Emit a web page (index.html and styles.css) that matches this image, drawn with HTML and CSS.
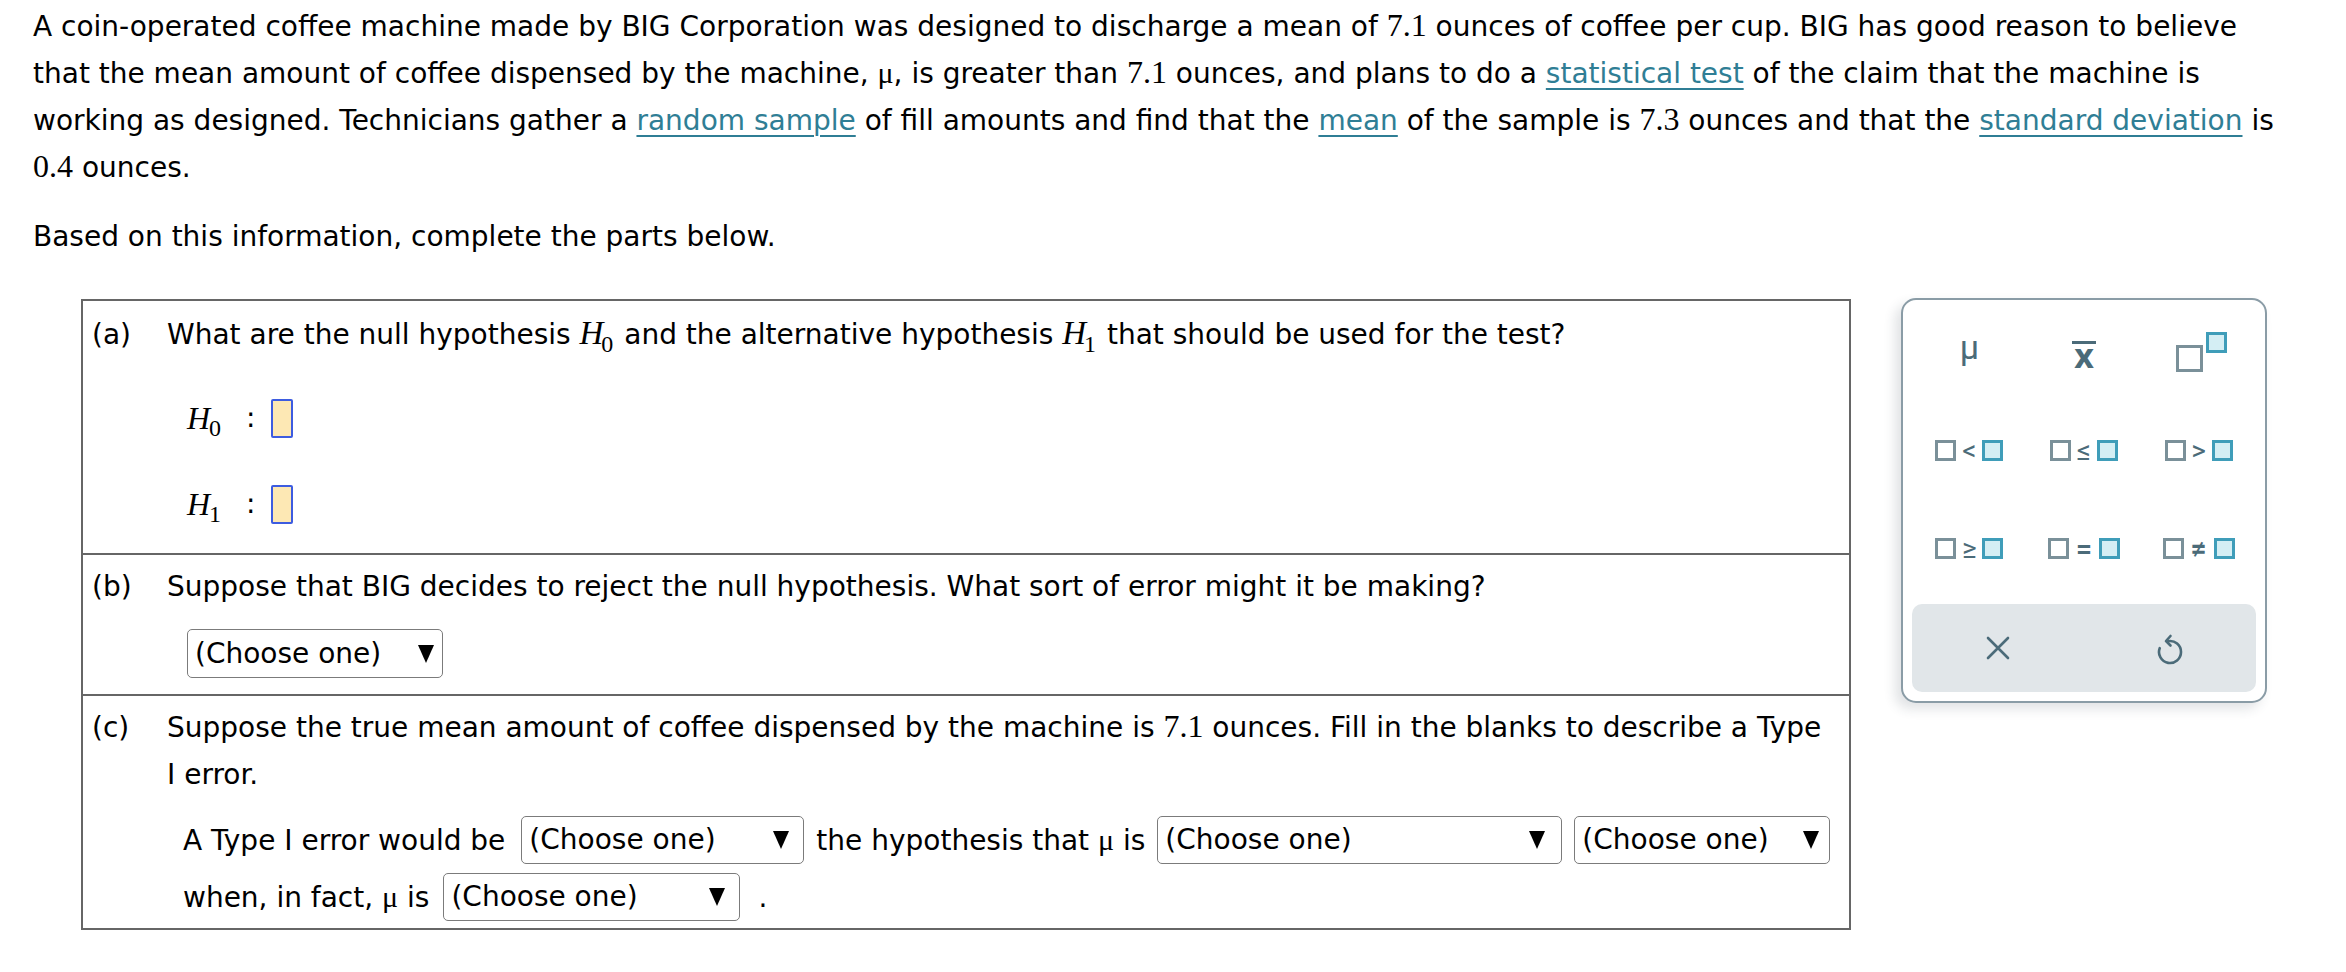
FILE: index.html
```html
<!DOCTYPE html>
<html lang="en">
<head>
<meta charset="utf-8">
<title>Hypothesis test</title>
<link rel="stylesheet" href="styles.css">
</head>
<body>
<div class="page">
  <p class="intro">A coin-operated coffee machine made by BIG Corporation was designed to discharge a mean of <span class="num">7.1</span> ounces of coffee per cup. BIG has good reason to believe that the mean amount of coffee dispensed by the machine, <span class="mu">μ</span>, is greater than <span class="num">7.1</span> ounces, and plans to do a <a class="link">statistical test</a> of the claim that the machine is working as designed. Technicians gather a <a class="link">random sample</a> of fill amounts and find that the <a class="link">mean</a> of the sample is <span class="num">7.3</span> ounces and that the <a class="link">standard deviation</a> is <span class="num">0.4</span> ounces.</p>
  <p class="intro2">Based on this information, complete the parts below.</p>

  <div class="workspace">
    <div class="qbox">
      <div class="part part-a">
        <div class="label">(a)</div>
        <div class="body">
          <div class="qline">What are the null hypothesis <span class="mvar">H</span><span class="msub">0</span> and the alternative hypothesis <span class="mvar">H</span><span class="msub">1</span> that should be used for the test?</div>
          <div class="hyps">
            <div class="hyp"><span class="hvar">H</span><span class="hsub">0</span><span class="colon">:</span><span class="slot"></span></div>
            <div class="hyp"><span class="hvar">H</span><span class="hsub">1</span><span class="colon">:</span><span class="slot"></span></div>
          </div>
        </div>
      </div>

      <div class="part part-b">
        <div class="label">(b)</div>
        <div class="body">
          <div class="qline">Suppose that BIG decides to reject the null hypothesis. What sort of error might it be making?</div>
          <div class="sel sel-error"><span>(Choose one)</span><span class="caret"></span></div>
        </div>
      </div>

      <div class="part part-c">
        <div class="label">(c)</div>
        <div class="body body-c">
          <div class="qline">Suppose the true mean amount of coffee dispensed by the machine is <span class="num">7.1</span> ounces. Fill in the blanks to describe a Type I error.</div>
          <div class="fill fill-first">
            <span class="ftext">A Type I error would be</span>
            <div class="sel sel-action"><span>(Choose one)</span><span class="caret"></span></div>
            <span class="ftext">the hypothesis that <span class="mu">μ</span> is</span>
            <div class="sel sel-value"><span>(Choose one)</span><span class="caret"></span></div>
            <div class="sel sel-short"><span>(Choose one)</span><span class="caret"></span></div>
          </div>
          <div class="fill">
            <span class="ftext">when, in fact, <span class="mu">μ</span> is</span>
            <div class="sel sel-fact"><span>(Choose one)</span><span class="caret"></span></div>
            <span class="ftext period">.</span>
          </div>
        </div>
      </div>
    </div>

    <div class="palette">
      <div class="keys">
        <div class="key"><span class="k-mu">μ</span></div>
        <div class="key"><span class="k-xbar">x</span></div>
        <div class="key"><span class="k-sup"><span class="bx bx-big"></span><span class="bx blue"></span></span></div>

        <div class="key"><span class="bx"></span><span class="op">&lt;</span><span class="bx blue"></span></div>
        <div class="key"><span class="bx"></span><span class="op">≤</span><span class="bx blue"></span></div>
        <div class="key"><span class="bx"></span><span class="op">&gt;</span><span class="bx blue"></span></div>

        <div class="key"><span class="bx"></span><span class="op">≥</span><span class="bx blue"></span></div>
        <div class="key"><span class="bx"></span><span class="op op-wide">=</span><span class="bx blue"></span></div>
        <div class="key"><span class="bx"></span><span class="op op-wide">≠</span><span class="bx blue"></span></div>
      </div>
      <div class="actions">
        <div class="act">
          <svg width="24" height="24" viewBox="0 0 24 24" aria-hidden="true">
            <path d="M2 2 L22 22 M22 2 L2 22" stroke="#4b6b79" stroke-width="2.6" stroke-linecap="round" fill="none"/>
          </svg>
        </div>
        <div class="act">
          <svg width="28" height="34" viewBox="0 0 28 34" aria-hidden="true">
            <path d="M12.1 10.2 A11 11 0 1 1 3.7 17.2" stroke="#4b6b79" stroke-width="2.6" stroke-linecap="round" fill="none"/>
            <path d="M14.5 5 L10 10 L14.5 14.5" stroke="#4b6b79" stroke-width="2.6" stroke-linecap="round" stroke-linejoin="round" fill="none"/>
          </svg>
        </div>
      </div>
    </div>
  </div>
</div>
</body>
</html>
```

FILE: styles.css
```css
* {
  box-sizing: border-box;
}

body {
  margin: 0;
  background: #ffffff;
  color: #000000;
  font-family: "DejaVu Sans", Verdana, sans-serif;
  font-size: 28px;
}

.page {
  padding-top: 3px;
}

.intro {
  margin: 0;
  padding: 0 46px 0 33px;
  line-height: 47px;
}

.intro2 {
  margin: 22px 0 0;
  padding-left: 33px;
  line-height: 47px;
}

.link {
  color: #2f7e95;
  text-decoration: underline;
  text-decoration-thickness: 2px;
  text-underline-offset: 5px;
}

.num {
  font-family: "Liberation Serif", "Times New Roman", serif;
  font-size: 32px;
  line-height: 1;
}

.mu {
  font-family: "Liberation Serif", "Times New Roman", serif;
  font-size: 30px;
  line-height: 1;
}

.mvar {
  font-family: "Liberation Serif", "Times New Roman", serif;
  font-style: italic;
  font-size: 33px;
  line-height: 1;
}

.msub {
  font-family: "Liberation Serif", "Times New Roman", serif;
  font-size: 24px;
  line-height: 1;
  vertical-align: -8px;
  margin-left: -2px;
  margin-right: 2px;
}

/* workspace */
.workspace {
  display: flex;
  align-items: flex-start;
  gap: 50px;
  margin-top: 39px;
  padding-left: 81px;
}

.qbox {
  flex: none;
  width: 1770px;
  border: 2px solid #666666;
}

.part {
  display: flex;
}

.part + .part {
  border-top: 2px solid #666666;
}

.label {
  flex: none;
  width: 84px;
  padding-left: 9px;
  line-height: 47px;
}

.body {
  flex: 1;
  min-width: 0;
  padding-right: 2px;
}

.body-c {
  padding-right: 20px;
}

.qline {
  line-height: 47px;
}

.part-a {
  padding: 10px 0 25px;
}

.part-b {
  padding: 8px 0 16px;
}

.part-c {
  padding: 8px 0 7px;
}

/* hypotheses */
.hyps {
  margin-top: 36px;
  padding-left: 20px;
}

.hyp {
  display: flex;
  align-items: center;
  height: 48px;
}

.hyp + .hyp {
  margin-top: 38px;
}

.hvar {
  font-family: "Liberation Serif", "Times New Roman", serif;
  font-style: italic;
  font-size: 32px;
  line-height: 1;
}

.hsub {
  font-family: "Liberation Serif", "Times New Roman", serif;
  font-size: 24px;
  line-height: 1;
  margin-top: 20px;
  margin-left: -1px;
}

.colon {
  margin: 0 15px 0 25px;
  line-height: 1;
}

.slot {
  display: block;
  width: 22px;
  height: 39px;
  border: 2px solid #3d5ce0;
  border-radius: 2px;
  background: #fde8b4;
}

/* dropdowns */
.sel {
  flex: none;
  display: flex;
  align-items: center;
  justify-content: space-between;
  height: 48px;
  border: 1.5px solid #7b7b7b;
  border-radius: 5px;
  padding: 0 8px 0 7px;
  background: #ffffff;
  line-height: 1;
}

.caret {
  width: 0;
  height: 0;
  border-left: 8px solid transparent;
  border-right: 8px solid transparent;
  border-top: 18px solid #000000;
}

.sel-error {
  width: 256px;
  height: 49px;
  margin: 19px 0 0 20px;
}

.sel-action {
  width: 283px;
  padding-right: 14px;
  margin-left: 4px;
}

.sel-value {
  width: 405px;
  padding-right: 16px;
}

.sel-short {
  width: 256px;
  padding-right: 10px;
}

.sel-fact {
  width: 297px;
  padding-right: 14px;
  margin-left: 2px;
}

.fill {
  display: flex;
  align-items: center;
  gap: 12px;
  height: 48px;
  padding-left: 16px;
}

.ftext {
  flex: none;
  white-space: nowrap;
}

.fill-first {
  margin-top: 18px;
}

.fill + .fill {
  margin-top: 9px;
}

.period {
  margin-left: 6px;
}

/* palette */
.palette {
  flex: none;
  display: flex;
  flex-direction: column;
  width: 366px;
  height: 405px;
  margin-top: -1px;
  padding: 3px 9px 9px;
  border: 2px solid #8a9ca6;
  border-radius: 15px;
  background: #ffffff;
  box-shadow: -6px 6px 12px rgba(40, 60, 70, 0.14);
}

.keys {
  display: grid;
  grid-template-columns: repeat(3, 1fr);
  grid-auto-rows: 98px;
}

.key {
  display: flex;
  align-items: center;
  justify-content: center;
  color: #4b6b79;
}

.k-mu {
  font-family: Roboto, "DejaVu Sans", sans-serif;
  font-size: 34px;
  line-height: 1;
  margin-bottom: 10px;
}

.k-xbar {
  display: block;
  font-family: "Open Sans", "DejaVu Sans", sans-serif;
  font-weight: 700;
  font-size: 34px;
  line-height: 18px;
  padding: 2px 2px 0;
  border-top: 3px solid #4b6b79;
}

.k-sup {
  display: flex;
  align-items: flex-start;
  gap: 3px;
  margin-left: 6px;
}

.bx {
  display: block;
  width: 21px;
  height: 21px;
  border: 3px solid #7a9099;
  background: #ffffff;
}

.bx.blue {
  border-color: #3f9db9;
  background: #d4eef4;
}

.bx-big {
  width: 27px;
  height: 27px;
  margin-top: 13px;
}

.op {
  width: 26px;
  text-align: center;
  font-family: Roboto, "DejaVu Sans", sans-serif;
  font-size: 28px;
  line-height: 21px;
  color: #4b6b79;
}

.op-wide {
  width: 30px;
  font-weight: 700;
}

.actions {
  margin-top: auto;
  height: 88px;
  display: grid;
  grid-template-columns: 1fr 1fr;
  align-items: center;
  justify-items: center;
  background: #e1e6e9;
  border-radius: 10px;
}

.act {
  display: flex;
  align-items: center;
  justify-content: center;
}
```
